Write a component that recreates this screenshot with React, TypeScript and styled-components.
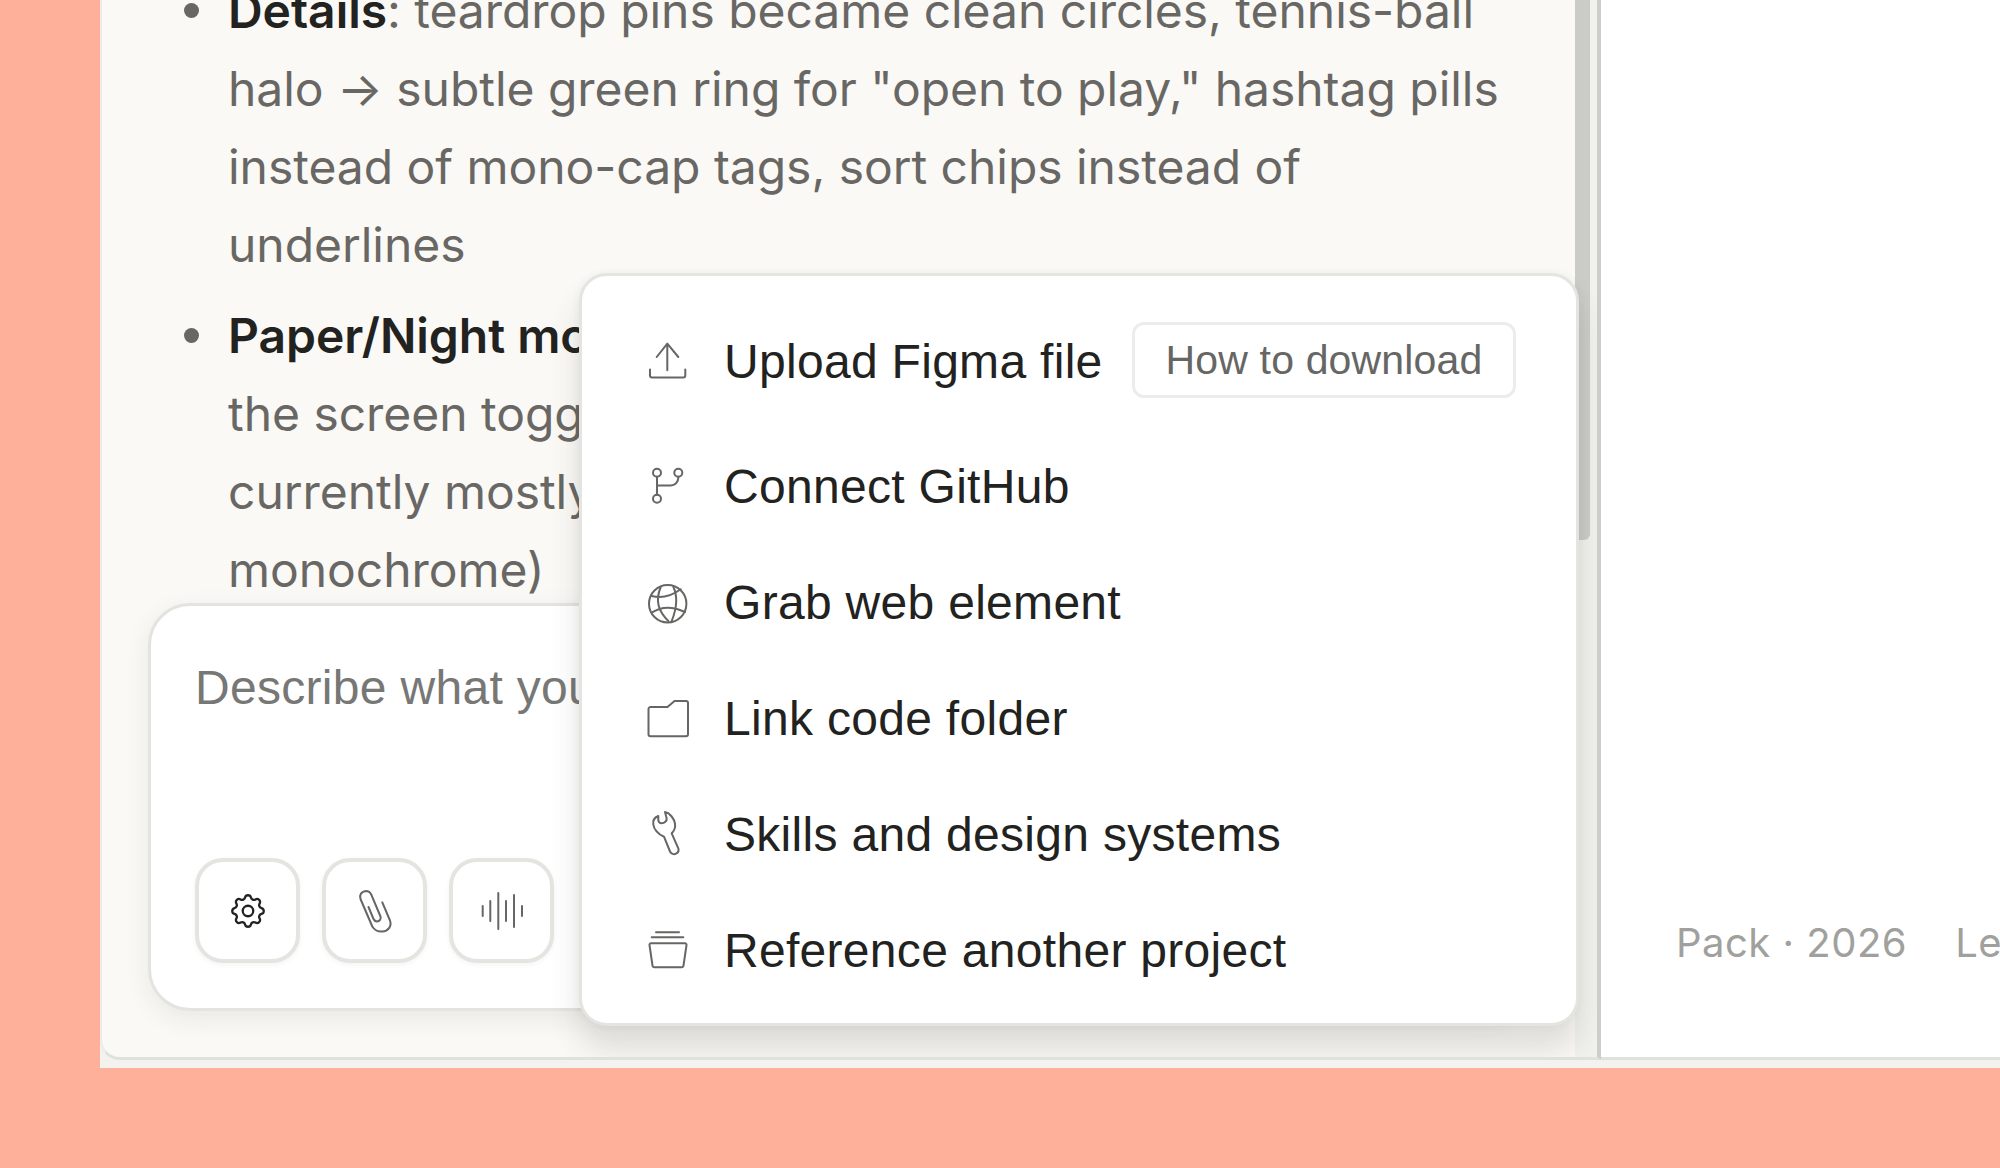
import React from "react";
import styled, { createGlobalStyle } from "styled-components";
import { TbSettings } from "react-icons/tb";

const Global = createGlobalStyle`
  html, body { margin: 0; padding: 0; background: #ffb09a; }
  * { box-sizing: border-box; }
`;

const Page = styled.div`
  width: 2000px;
  height: 1168px;
  overflow: hidden;
  padding: 0 0 100px 100px;
  background: #ffb09a;
`;

const Frame = styled.div`
  height: 100%;
  display: flex;
  padding-bottom: 8px;
  background: #f2f2ee;
`;

const Chat = styled.section`
  position: relative;
  width: 1501px;
  flex: none;
  display: flex;
  overflow: hidden;
  border-right: 4px solid #cdcdca;
  border-bottom: 3px solid #e0e1dd;
  border-left: 2px solid #ecece8;
  border-bottom-left-radius: 20px;
  background: #faf9f6;
`;

const Column = styled.div`
  flex: 1;
  min-width: 0;
  display: flex;
  flex-direction: column;
  justify-content: flex-end;
  padding: 0 50px 46px 46px;
`;

const Rail = styled.div`
  width: 22px;
  flex: none;
  background: #f1f1ed;
`;

const Thumb = styled.div`
  width: 15px;
  height: 540px;
  background: #cbcbc8;
  border-bottom-right-radius: 6px;
`;

const Notes = styled.ul`
  margin: 0 0 -6px;
  padding: 0 0 0 80px;
  list-style: none;
  font-family: Inter, sans-serif;
  font-size: 48px;
  letter-spacing: -0.04px;
  line-height: 78px;
  color: #696764;
  white-space: nowrap;
  strong { font-weight: 600; color: #222220; }
`;

const Note = styled.li`
  position: relative;
  margin-top: 13px;
  &::before {
    content: "";
    position: absolute;
    left: -44px;
    top: 31px;
    width: 15px;
    height: 15px;
    border-radius: 50%;
    background: #696764;
  }
`;

const Composer = styled.div`
  height: 408px;
  flex: none;
  position: relative;
  display: flex;
  flex-direction: column;
  justify-content: space-between;
  padding: 55px 44px 45px;
  border: 3px solid #e3e3df;
  border-radius: 42px;
  background: #fff;
  box-shadow: 0 8px 26px rgba(40, 40, 30, 0.08);
`;

const Placeholder = styled.div`
  font-family: "Liberation Sans", Arial, sans-serif;
  font-size: 48px;
  letter-spacing: 0.3px;
  line-height: 54px;
  color: #777775;
  white-space: nowrap;
`;

const Tools = styled.div`
  display: flex;
  gap: 22px;
`;

const ToolButton = styled.button`
  width: 105px;
  height: 105px;
  display: flex;
  align-items: center;
  justify-content: center;
  padding: 0;
  color: #222;
  background: #fff;
  border: 4px solid #e4e4e0;
  border-radius: 28px;
  box-shadow: 0 2px 5px rgba(40, 40, 30, 0.05);
`;

const Popup = styled.div`
  position: absolute;
  left: 477px;
  bottom: 31px;
  width: 1000px;
  height: 753px;
  padding: 28px 44px 12px 66px;
  background: #fff;
  border: 3px solid #e4e4e0;
  border-radius: 28px;
  box-shadow: 0 24px 30px rgba(60, 60, 50, 0.14), 0 0 8px rgba(60, 60, 50, 0.06);
`;

const Row = styled.div<{ $first?: boolean }>`
  height: 116px;
  display: flex;
  align-items: center;
  margin-bottom: ${(p) => (p.$first ? "9px" : "0")};
`;

const RowIcon = styled.svg`
  width: 40px;
  height: 40px;
  flex: none;
  margin-right: 36px;
  overflow: visible;
  fill: none;
  stroke: #666664;
  stroke-width: 2;
  stroke-linecap: round;
  stroke-linejoin: round;
`;

const RowLabel = styled.span`
  font-family: "Liberation Sans", Arial, sans-serif;
  font-size: 48px;
  letter-spacing: 0.3px;
  line-height: 56px;
  color: #222220;
  white-space: nowrap;
`;

const HowTo = styled.button`
  margin: -4px 0 0 29px;
  height: 76px;
  padding: 0 31px;
  font-family: "Liberation Sans", Arial, sans-serif;
  font-size: 41px;
  letter-spacing: 0.15px;
  color: #666664;
  white-space: nowrap;
  background: #fff;
  border: 3px solid #ececea;
  border-radius: 12px;
`;

const Side = styled.aside`
  flex: 1;
  min-width: 0;
  overflow: hidden;
  display: flex;
  align-items: flex-end;
  gap: 48px;
  padding: 0 0 89px 75px;
  background: #fff;
  border-bottom: 3px solid #e0e1dd;
  font-family: Inter, sans-serif;
  font-size: 40px;
  letter-spacing: 0.5px;
  line-height: 50px;
  color: #a0a09d;
  white-space: nowrap;
`;

const ToolIcon = styled.svg`
  width: 40px;
  height: 40px;
  overflow: visible;
  fill: none;
  stroke: #666664;
  stroke-width: 2;
  stroke-linecap: round;
  stroke-linejoin: round;
`;

const menu = [
  {
    label: "Connect GitHub",
    icon: (
      <>
        <circle cx="9" cy="5.7" r="4" />
        <circle cx="30.3" cy="5.7" r="4" />
        <circle cx="9" cy="31.7" r="4" />
        <path d="M9 9.7V27.7M30.3 9.7V11a7.5 7.5 0 0 1-7.5 7.5H9" />
      </>
    ),
  },
  {
    label: "Grab web element",
    icon: (
      <>
        <circle cx="19.7" cy="20.7" r="18.7" />
        <path d="M12.7 4C7 18 10.3 28 20.3 38M25.3 3.700C31.3 16.300 27 29.700 23.700 38M3.700 13Q18 17 32.700 6.300M3.700 29.700Q18 20 37 29" />
      </>
    ),
  },
  {
    label: "Link code folder",
    icon: <path d="M.5 10a2 2 0 0 1 2-2h17l7-6H38a2 2 0 0 1 2 2v31.3a2 2 0 0 1-2 2H2.5a2 2 0 0 1-2-2Z" />,
  },
  {
    label: "Skills and design systems",
    icon: (
      <path d="M10.300 1C6.500 2.500 4.700 6 5.300 9.500 5.800 14 10 19.500 16 21.700L22 36.500C23 39 26 39.700 28 38.700 30 37.700 31 35.500 30.300 33.300L23.700 18.300C26 16 27.500 12.500 27 9 26.500 4 22-2 17-3L18.700 3.500C19 6 16.500 8.300 13.700 8.300 11.500 8.300 10.300 6.500 10.300 5Z" />
    ),
  },
  {
    label: "Reference another project",
    icon: (
      <path d="M8 1.300H31M3.700 6.300H35.300M3 12.300H37a1.500 1.500 0 0 1 1.500 1.800L35.500 34.500a2 2 0 0 1-2 1.800H6.500a2 2 0 0 1-2-1.800L1.500 14.100A1.500 1.500 0 0 1 3 12.300Z" />
    ),
  },
];

function App() {
  return (
    <Page>
      <Global />
      <Frame>
        <Chat>
          <Column>
            <Notes>
              <Note>
                <strong>Details</strong>: teardrop pins became clean circles, tennis-ball
                <br />
                halo → subtle green ring for "open to play," hashtag pills
                <br />
                instead of mono-cap tags, sort chips instead of
                <br />
                underlines
              </Note>
              <Note>
                <strong>Paper/Night mode</strong>: both themes stay, with
                <br />
                the screen toggle kept in the header
                <br />
                currently mostly neutral
                <br />
                monochrome)
              </Note>
            </Notes>
            <Composer>
              <Placeholder>Describe what you want to change</Placeholder>
              <Tools>
                <ToolButton>
                  <TbSettings size={42} strokeWidth={1.3} />
                </ToolButton>
                <ToolButton>
                  <ToolIcon viewBox="0 0 40 40">
                    <path d="M27.300 11.300L35 29.500c2 6-2 10.500-7.500 11-4.500.5-8.500-2-10.200-5L5.500 8C4 4 6.500.3 10.700 0c2.800 0 4.800 1.700 5.600 3.700l9.200 21.800c1 2.500-1 5-3.500 5-2 0-3-1.500-3.700-3L13.500 16" />
                  </ToolIcon>
                </ToolButton>
                <ToolButton>
                  <ToolIcon viewBox="0 0 40 40">
                    <path d="M.7 15v10M8.300 10v20M16.300 2v36M24 10v20M32 4v32M40 15v10" />
                  </ToolIcon>
                </ToolButton>
              </Tools>
            </Composer>
          </Column>
          <Rail>
            <Thumb />
          </Rail>
          <Popup>
            <Row $first>
              <RowIcon viewBox="0 0 40 40">
                <path d="M19.300 28.300V1.700M8.700 15 19.300 1.700 30.300 15M2 27.500v6a2 2 0 0 0 2 2h31.300a2 2 0 0 0 2-2v-6" />
              </RowIcon>
              <RowLabel>Upload Figma file</RowLabel>
              <HowTo>How to download</HowTo>
            </Row>
            {menu.map((item) => (
              <Row key={item.label}>
                <RowIcon viewBox="0 0 40 40">{item.icon}</RowIcon>
                <RowLabel>{item.label}</RowLabel>
              </Row>
            ))}
          </Popup>
        </Chat>
        <Side>
          <span>Pack · 2026</span>
          <span>Legal</span>
        </Side>
      </Frame>
    </Page>
  );
}

export default App;
